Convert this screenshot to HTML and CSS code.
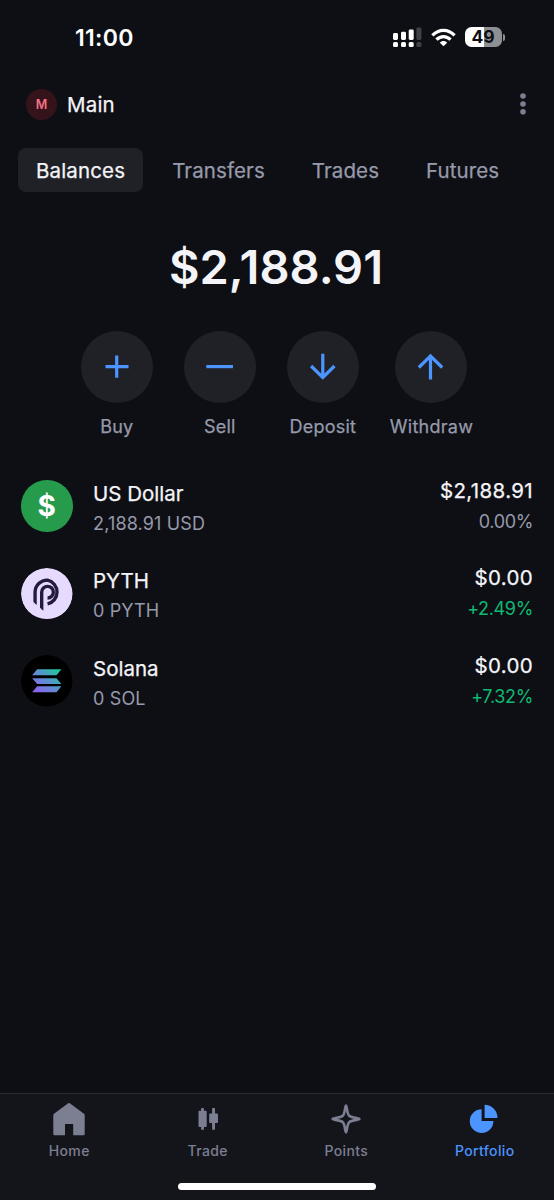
FILE: index.html
```html
<!DOCTYPE html>
<html lang="en">
<head>
<meta charset="utf-8">
<title>Portfolio</title>
<link rel="stylesheet" href="styles.css">
</head>
<body>
<div class="app">
  <div class="status">
    <span class="time">11:00</span>
    <div class="status-icons">
      <svg class="signal" width="29" height="20" viewBox="0 0 29 20" fill="#fff">
        <rect x="0" y="6" width="5" height="7" rx="1.4"/><rect x="8" y="4.8" width="5" height="8.2" rx="1.4"/><rect x="15.7" y="2.6" width="5" height="10.4" rx="1.4"/>
        <rect x="0" y="15" width="5" height="5" rx="1.5"/><rect x="8" y="15" width="5" height="5" rx="1.5"/><rect x="15.7" y="15" width="5" height="5" rx="1.5"/>
        <g fill="#404146"><rect x="23.4" y="0.5" width="5" height="12.5" rx="1.4"/><rect x="23.4" y="15" width="5" height="5" rx="1.5"/></g>
      </svg>
      <svg class="wifi" width="25" height="19" viewBox="0 0 25 19" fill="none" stroke="#fff" stroke-width="3.3">
        <path d="M1.4 7.4C7.8 .6 17.2 .6 23.6 7.4"/>
        <path d="M5.5 11.6C9.5 7.5 15.5 7.5 19.5 11.6"/>
        <path d="M12.5 18.3L8.8 14.7C10.8 12.4 14.2 12.4 16.2 14.7Z" fill="#fff" stroke="none"/>
      </svg>
      <div class="battery"><span>49</span></div><i class="cap"></i>
    </div>
  </div>

  <header class="header">
    <span class="avatar">M</span>
    <span class="account">Main</span>
    <svg class="more" width="8" height="24" viewBox="0 0 8 24" fill="#7c7f90"><circle cx="4" cy="4" r="2.8"/><circle cx="4" cy="12" r="2.8"/><circle cx="4" cy="19.7" r="2.8"/></svg>
  </header>

  <nav class="tabs">
    <span class="tab tab-on">Balances</span>
    <span class="tab">Transfers</span>
    <span class="tab">Trades</span>
    <span class="tab">Futures</span>
  </nav>

  <div class="total">$2,188.91</div>

  <div class="actions">
    <div class="action"><span class="disc"><svg width="30" height="30" viewBox="0 0 30 30"><path d="M3.5 14.6H26.5M14.7 3.4V25.8"/></svg></span><span class="label">Buy</span></div>
    <div class="action"><span class="disc"><svg width="30" height="30" viewBox="0 0 30 30"><path d="M1.3 14.6H28"/></svg></span><span class="label">Sell</span></div>
    <div class="action"><span class="disc"><svg width="30" height="30" viewBox="0 0 30 30"><path d="M14.8 1.7V25.5M3.1 14L14.8 25.5L26.5 14"/></svg></span><span class="label">Deposit</span></div>
    <div class="action"><span class="disc"><svg width="30" height="30" viewBox="0 0 30 30"><path d="M14.5 27.5V4.5M2.8 15.5L14.5 4L26.2 15.5"/></svg></span><span class="label">Withdraw</span></div>
  </div>

  <main class="assets">
    <div class="asset">
      <span class="coin usd">$</span>
      <div class="info"><span class="name">US Dollar</span><span class="sub">2,188.91 USD</span></div>
      <div class="value"><span class="price">$2,188.91</span><span class="pct">0.00%</span></div>
    </div>
    <div class="asset">
      <svg class="coin" viewBox="0 0 52 52"><circle cx="26" cy="26" r="26" fill="#e6dafe"/>
        <g fill="none" stroke="#241b3c" stroke-width="3.4">
          <path d="M14.2 37V24.4A12.3 12.3 0 0 1 26.8 12.3A12.3 12.3 0 0 1 26.8 36.3"/>
          <path d="M20.9 43V24.4A5.9 5.9 0 0 1 26.8 18.5A5.9 5.9 0 0 1 26.8 30.3"/>
        </g>
        <path d="M12.2 33.8L16.6 38.4H12.2ZM19 39.8L23.3 44.2H19Z" fill="#e6dafe"/>
      </svg>
      <div class="info"><span class="name">PYTH</span><span class="sub">0 PYTH</span></div>
      <div class="value"><span class="price">$0.00</span><span class="pct up">+2.49%</span></div>
    </div>
    <div class="asset">
      <svg class="coin" viewBox="0 0 52 52"><defs><linearGradient id="sol" gradientUnits="userSpaceOnUse" x1="14" y1="39" x2="38" y2="13"><stop offset="0" stop-color="#945cf6"/><stop offset=".5" stop-color="#5c8fd0"/><stop offset="1" stop-color="#18cf98"/></linearGradient></defs>
        <circle cx="26" cy="26" r="26" fill="#000"/>
        <path fill="url(#sol)" d="M16.3 14.4H40.8L35.8 20.4H11.3ZM11.3 23.4H35.8L40.8 29.4H16.3ZM16.3 31.6H40.8L35.8 37.6H11.3Z"/>
      </svg>
      <div class="info"><span class="name">Solana</span><span class="sub">0 SOL</span></div>
      <div class="value"><span class="price">$0.00</span><span class="pct up">+7.32%</span></div>
    </div>
  </main>

  <footer class="bottom">
    <div class="bottom-items">
      <div class="item"><svg width="36" height="36" viewBox="0 0 36 36" fill="currentColor"><path d="M17.2 2.3Q18 1.6 18.8 2.3L33 12.8Q33.7 13.4 33.7 14.2V33Q33.7 34.2 32.5 34.2H22.2V23H14V34.2H3.5Q2.3 34.2 2.3 33V14.2Q2.3 13.4 3 12.8Z"/></svg><span>Home</span></div>
      <div class="item"><svg width="36" height="36" viewBox="0 0 36 36" fill="currentColor"><rect x="8.5" y="9.8" width="8.2" height="16.2" rx="1"/><rect x="11.1" y="7" width="2.8" height="21.8" rx=".5"/><rect x="19.2" y="12.6" width="8.8" height="9.4" rx="1"/><rect x="22.1" y="7" width="2.9" height="21.8" rx=".5"/></svg><span>Trade</span></div>
      <div class="item"><svg width="36" height="36" viewBox="0 0 36 36" fill="none" stroke="currentColor" stroke-width="2.6" stroke-linejoin="round"><path d="M18 4.6C19 4.6 18.8 12.2 21.2 14.8C23.8 17.2 31.4 17 31.4 18C31.4 19 23.8 18.8 21.2 21.2C18.8 23.8 19 31.4 18 31.4C17 31.4 17.2 23.8 14.8 21.2C12.2 18.8 4.6 19 4.6 18C4.6 17 12.2 17.2 14.8 14.8C17.2 12.2 17 4.6 18 4.6Z"/></svg><span>Points</span></div>
      <div class="item item-on"><svg width="36" height="36" viewBox="0 0 36 36" fill="currentColor"><path d="M14.6 8.3V20H26.4A11.8 11.8 0 1 1 14.6 8.3Z"/><path d="M17.6 3.8A12.9 12.9 0 0 1 30.5 16.9H17.6Z"/></svg><span>Portfolio</span></div>
    </div>
    <div class="home-bar"></div>
  </footer>
</div>
</body>
</html>
```

FILE: styles.css
```css
* { box-sizing: border-box; }
body { margin: 0; background: #0e0f14; font-family: Inter, "Liberation Sans", sans-serif; color: #f4f4f8; }
.app { width: 554px; height: 1200px; display: flex; flex-direction: column; overflow: hidden; }
svg { display: block; flex: none; }

.status { height: 74px; display: flex; justify-content: space-between; align-items: center; padding: 0 49px 0 75px; }
.time { font-size: 23px; font-weight: 600; color: #fff; line-height: 28px; margin-top: 1px; letter-spacing: .3px; }
.status-icons { display: flex; align-items: center; }
.wifi { margin: 0 9px; }
.battery { width: 37px; height: 20px; border-radius: 6.5px; background: linear-gradient(90deg, #fff 50%, #8e8f92 50%); color: #0e0f14; font-size: 17.5px; font-weight: 700; line-height: 20px; text-align: center; }
.cap { width: 2.5px; height: 7px; margin-left: 1px; border-radius: 0 3px 3px 0; background: #8e8f92; }

.header { height: 60px; display: flex; align-items: center; padding: 0 27px 0 26px; }
.avatar { width: 31px; height: 31px; border-radius: 50%; background: #35131b; color: #f37384; font-size: 12.5px; font-weight: 600; line-height: 31px; text-align: center; }
.account { margin-left: 10px; font-size: 20.5px; font-weight: 400; letter-spacing: .2px; }
.more { margin-left: auto; }

.account, .tab, .label, .name, .price { -webkit-text-stroke: .25px currentColor; }

.tabs { display: flex; gap: 11px; padding: 14px 18px 0; }
.tab { height: 44px; padding: 0 18px; border-radius: 8px; font-size: 20.5px; font-weight: 400; letter-spacing: .1px; line-height: 45px; color: #969aab; white-space: nowrap; }
.tab-on { background: #202127; color: #f4f4f8; letter-spacing: .15px; }

.total { margin-top: 46px; height: 58px; padding-right: 2px; line-height: 57px; text-align: center; font-size: 47px; font-weight: 600; }

.actions { display: flex; justify-content: center; gap: 31px; margin-top: 35px; }
.action { min-width: 72px; display: flex; flex-direction: column; align-items: center; }
.disc { width: 72px; height: 72px; border-radius: 50%; background: #202127; display: grid; place-items: center; }
.disc path { fill: none; stroke: #4c94ff; stroke-width: 3.2; }
.label { margin-top: 12px; font-size: 18px; font-weight: 400; letter-spacing: .25px; line-height: 24px; color: #969aab; }

.assets { margin-top: 23px; padding: 0 21px; }
.asset { height: 87.5px; display: flex; align-items: center; }
.coin { width: 51.5px; height: 51.5px; border-radius: 50%; flex: none; }
.usd { background: #259b4b; color: #fff; font-size: 28px; font-weight: 700; line-height: 52px; text-align: center; }
.info, .value { display: flex; flex-direction: column; }
.info { margin: 5.5px 0 0 20.5px; }
.value { margin: 2px 0 0 auto; align-items: flex-end; }
.name, .price { font-size: 20.5px; font-weight: 400; line-height: 30px; }
.price { letter-spacing: .35px; }
.sub, .pct { font-size: 18px; font-weight: 400; line-height: 30px; color: #969aab; letter-spacing: .15px; }
.pct { line-height: 32px; letter-spacing: -.35px; }
.pct.up { color: #0fb972; }

.bottom { margin-top: auto; height: 107px; border-top: 1px solid #2a2b31; background: #14151b; }
.bottom-items { display: grid; grid-template-columns: repeat(4, 1fr); height: 89px; padding-top: 7px; }
.item { display: flex; flex-direction: column; align-items: center; color: #7c7f92; font-size: 14px; font-weight: 500; line-height: 20px; letter-spacing: .35px; }
.item span { margin-top: 4px; }
.item-on { color: #4c94ff; }
.home-bar { width: 198px; height: 7px; margin: 0 auto; border-radius: 4px; background: #fff; }
```
